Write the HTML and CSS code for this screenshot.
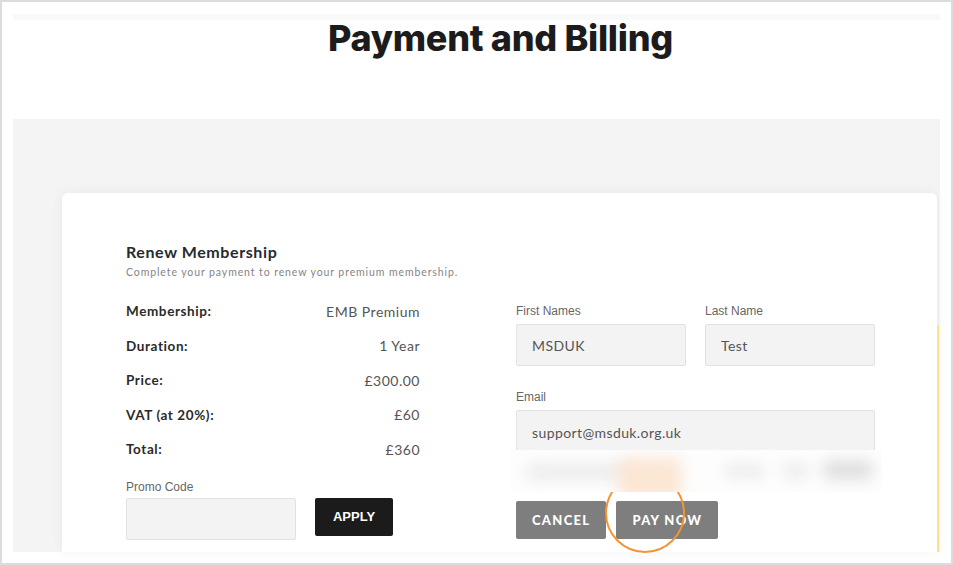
FILE: index.html
```html
<!DOCTYPE html>
<html lang="en">
<head>
  <meta charset="UTF-8">
  <title>Payment and Billing</title>
  <link rel="stylesheet" href="styles.css">
</head>
<body>
  <div class="frame">
    <div class="page">
      <div class="topstrip"></div>
      <div class="header">
        <h1>Payment and Billing</h1>
      </div>

      <div class="section">
        <div class="card">
          <div class="summary">
            <h2>Renew Membership</h2>
            <p class="sub">Complete your payment to renew your premium membership.</p>

            <div class="row"><span class="lbl">Membership:</span><span class="val">EMB Premium</span></div>
            <div class="row"><span class="lbl">Duration:</span><span class="val">1 Year</span></div>
            <div class="row"><span class="lbl">Price:</span><span class="val">&pound;300.00</span></div>
            <div class="row"><span class="lbl">VAT (at 20%):</span><span class="val">&pound;60</span></div>
            <div class="row"><span class="lbl">Total:</span><span class="val">&pound;360</span></div>

            <div class="promo">
              <label class="flabel">Promo Code</label>
              <div class="promo-line">
                <div class="field promo-field"></div>
                <button class="btn-dark">APPLY</button>
              </div>
            </div>
          </div>

          <div class="details">
            <div class="names">
              <div class="group">
                <label class="flabel">First Names</label>
                <div class="field">MSDUK</div>
              </div>
              <div class="group">
                <label class="flabel">Last Name</label>
                <div class="field">Test</div>
              </div>
            </div>
            <div class="group email">
              <label class="flabel">Email</label>
              <div class="field">support@msduk.org.uk</div>
            </div>
            <div class="actions">
              <button class="btn-grey">CANCEL</button>
              <button class="btn-grey">PAY NOW</button>
            </div>
          </div>

          <div class="ring"></div>
          <!-- redacted strip over the card element -->
          <div class="redact">
            <span class="blob b1"></span>
            <span class="blob b2"></span>
            <span class="blob b3"></span>
            <span class="blob b4"></span>
            <span class="blob b5"></span>
          </div>
        </div>
        <div class="edge"></div>
      </div>
    </div>
  </div>
</body>
</html>
```

FILE: styles.css
```css
* {
  box-sizing: border-box;
}

body {
  margin: 0;
  background: #fff;
  font-family: "Lato", "Liberation Sans", sans-serif;
}

.frame {
  width: 953px;
  height: 565px;
  border: 2px solid #dcdcdc;
  padding: 12px 11px 0 11px;
  background: #fff;
  overflow: hidden;
}

.page {
  width: 927px;
}

.topstrip {
  height: 6px;
  background: #f9f9f9;
}

.header {
  height: 99px;
  text-align: center;
  padding-left: 48px;
}

h1 {
  margin: 0;
  font-family: "Inter", "Lato", sans-serif;
  font-weight: 800;
  font-size: 36px;
  letter-spacing: -0.3px;
  color: #1c1c1c;
  line-height: 36px;
}

.section {
  position: relative;
  height: 433px;
  background: #f4f4f4;
  padding: 74px 3px 0 49px;
}

.card {
  position: relative;
  height: 359px;
  background: #fff;
  border-radius: 6px 6px 0 0;
  box-shadow: 0 0 14px rgba(0, 0, 0, 0.05);
  padding: 50px 0 0 64px;
  display: flex;
  gap: 96px;
}

.summary {
  width: 294px;
}

h2 {
  margin: 0;
  font-size: 16px;
  font-weight: 700;
  color: #262a30;
  letter-spacing: 0.6px;
  line-height: 18px;
}

.sub {
  margin: 4px 0 15px;
  font-size: 10.5px;
  letter-spacing: 0.9px;
  color: #858585;
  line-height: 14px;
  white-space: nowrap;
}

.row {
  height: 34.5px;
  display: flex;
  justify-content: space-between;
  align-items: center;
}

.lbl {
  font-size: 13.5px;
  font-weight: 700;
  color: #2b2b2b;
  letter-spacing: 0.6px;
}

.val {
  font-size: 14px;
  color: #555;
  letter-spacing: 0.5px;
}

.promo {
  margin-top: 13px;
}

.flabel {
  display: block;
  font-family: "Liberation Sans", sans-serif;
  font-size: 12px;
  color: #666;
  line-height: 14px;
  margin-bottom: 4px;
}

.promo-line {
  display: flex;
  gap: 19px;
  align-items: flex-start;
}

.field {
  height: 42px;
  background: #f3f3f3;
  border: 1px solid #e2e2e2;
  border-radius: 2px;
  padding: 0 15px;
  font-size: 14px;
  color: #555;
  display: flex;
  align-items: center;
  letter-spacing: 0.4px;
}

.promo-field {
  width: 170px;
}

.btn-dark {
  height: 38px;
  width: 78px;
  border: 0;
  border-radius: 2px;
  background: #1b1b1b;
  color: #fff;
  font-family: "Liberation Sans", sans-serif;
  font-weight: 700;
  font-size: 13px;
}

.details {
  width: 359px;
}

.names {
  display: flex;
  gap: 19px;
}

.names .group {
  width: 170px;
}

.details .flabel {
  margin-top: 61px;
  margin-bottom: 6px;
}

.names + .email .flabel {
  margin-top: 24px;
}

.email .field {
  height: 60px;
  align-items: flex-start;
  padding-top: 13px;
}

.actions {
  display: flex;
  gap: 10px;
  margin-top: 31px;
}

.btn-grey {
  height: 38px;
  padding: 0 16px;
  border: 0;
  border-radius: 2px;
  background: #7e7e7e;
  color: #fff;
  font-family: "Lato", sans-serif;
  font-weight: 900;
  font-size: 13px;
  letter-spacing: 1.3px;
}

.redact {
  position: absolute;
  left: 448px;
  top: 257px;
  width: 372px;
  height: 42px;
  background: #fdfdfd;
  overflow: hidden;
}

.blob {
  position: absolute;
  border-radius: 10px;
  filter: blur(7px);
  background: #ececec;
}

.b1 { left: 16px; top: 14px; width: 110px; height: 16px; }
.b2 { left: 108px; top: 8px; width: 64px; height: 40px; background: #fce6d4; }
.b3 { left: 215px; top: 14px; width: 40px; height: 14px; }
.b4 { left: 272px; top: 14px; width: 28px; height: 14px; }
.b5 { left: 312px; top: 10px; width: 52px; height: 20px; background: #e0e0e0; }

.ring {
  position: absolute;
  left: 543px;
  top: 280px;
  width: 80px;
  height: 80px;
  border: 2px solid #f39433;
  border-radius: 50%;
}

.edge {
  position: absolute;
  right: 1px;
  top: 206px;
  width: 2px;
  height: 227px;
  background: #fae38f;
}
```
